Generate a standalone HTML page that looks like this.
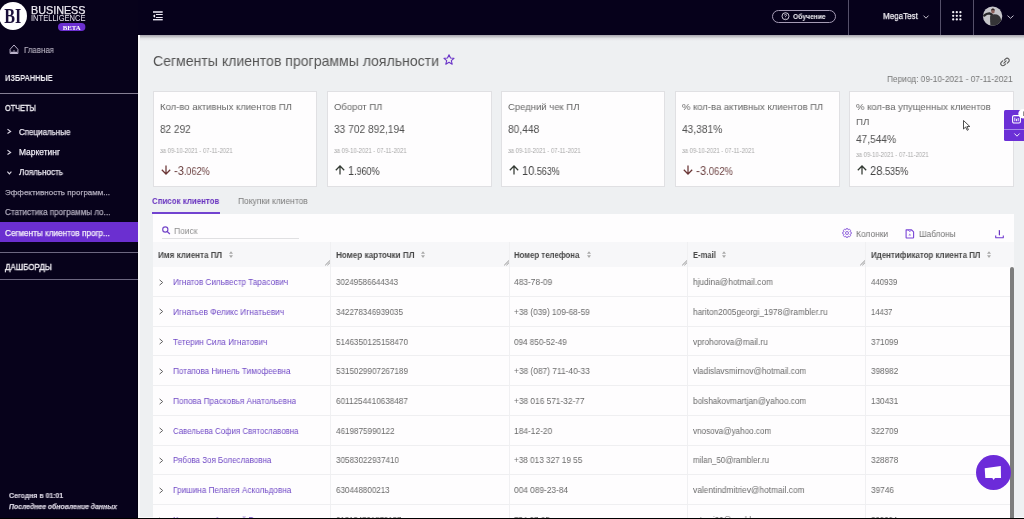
<!DOCTYPE html>
<html><head><meta charset="utf-8">
<style>
html,body{margin:0;padding:0;width:1024px;height:519px;overflow:hidden;background:#eef0f2;font-family:"Liberation Sans",sans-serif;}
.t{position:absolute;line-height:1;white-space:nowrap;transform-origin:0 0;will-change:transform;}
.r{position:absolute;}
svg{position:absolute;overflow:visible;will-change:transform;}
</style></head><body>
<div class="r" style="left:0px;top:0px;width:138px;height:519px;background:#07021b;"></div>
<div class="r" style="left:137px;top:34px;width:1px;height:485px;background:#030010;"></div>
<svg style="left:0px;top:0px" width="100" height="34" viewBox="0 0 100 34"><circle cx="13" cy="16" r="14" fill="#fff"/><text x="12.8" y="23" text-anchor="middle" font-family="Liberation Serif" font-weight="700" font-size="21" fill="#1a0f3a" textLength="17" lengthAdjust="spacingAndGlyphs">BI</text><text x="31" y="14" font-family="Liberation Sans" font-weight="400" font-size="11" fill="#ebe8f0" stroke="#ebe8f0" stroke-width="0.25" textLength="54.5" lengthAdjust="spacingAndGlyphs">BUSINESS</text><text x="31" y="21.2" font-family="Liberation Sans" font-size="8.4" fill="#e6e2ee" textLength="54.5" lengthAdjust="spacingAndGlyphs">INTELLIGENCE</text><rect x="58" y="23" width="27.4" height="8" rx="4" fill="#6b2fd0"/><text x="71.7" y="29.8" text-anchor="middle" font-family="Liberation Serif" font-weight="700" font-size="7" fill="#fff" textLength="18" lengthAdjust="spacingAndGlyphs">BETA</text></svg>
<svg style="left:9px;top:44px" width="10" height="11" viewBox="0 0 10 11"><path d="M5 1 L8.9 5.3 V9.5 H1.1 V5.3 Z" fill="none" stroke="#bcb4cc" stroke-width="1" stroke-linejoin="round"/><path d="M1.6 8.4 H8.4" stroke="#bcb4cc" stroke-width="1.3"/><path d="M4.2 7.2 Q5 5.8 5.8 7.2" fill="none" stroke="#bcb4cc" stroke-width="0.9"/></svg>
<div class="t" style="left:23.72px;top:46.00px;font-size:8.3px;color:#bcb7c6;font-weight:400;transform:scaleX(0.9496);-webkit-text-stroke:0.1px currentColor;">Главная</div>
<div class="t" style="left:5.04px;top:74.00px;font-size:9px;color:#f0eef4;font-weight:700;transform:scaleX(0.8209);">ИЗБРАННЫЕ</div>
<div class="r" style="left:0px;top:93px;width:138px;height:1px;background:#857f94;"></div>
<div class="t" style="left:5.04px;top:104.00px;font-size:8.6px;color:#f0eef4;font-weight:400;transform:scaleX(0.8493);-webkit-text-stroke:0.35px currentColor;">ОТЧЕТЫ</div>
<svg style="left:6.9px;top:129.4px" width="5" height="5" viewBox="0 0 5 5"><path d="M0.5 0.3 L3.6 2.4 L0.5 4.5" fill="none" stroke="#dcd8e4" stroke-width="1.1"/></svg>
<div class="t" style="left:19.42px;top:128.00px;font-size:8.4px;color:#ece9f2;font-weight:400;transform:scaleX(0.9530);-webkit-text-stroke:0.25px currentColor;">Специальные</div>
<svg style="left:6.9px;top:149.9px" width="5" height="5" viewBox="0 0 5 5"><path d="M0.5 0.3 L3.6 2.4 L0.5 4.5" fill="none" stroke="#dcd8e4" stroke-width="1.1"/></svg>
<div class="t" style="left:19.40px;top:148.00px;font-size:8.4px;color:#ece9f2;font-weight:400;transform:scaleX(1.0069);-webkit-text-stroke:0.25px currentColor;">Маркетинг</div>
<svg style="left:6.9px;top:170.79999999999998px" width="5" height="4" viewBox="0 0 5 4"><path d="M0.4 0.6 L2.4 2.9 L4.4 0.6" fill="none" stroke="#dcd8e4" stroke-width="1.1"/></svg>
<div class="t" style="left:19.42px;top:168.00px;font-size:8.4px;color:#ece9f2;font-weight:400;transform:scaleX(0.9625);-webkit-text-stroke:0.25px currentColor;">Лояльность</div>
<div class="t" style="left:5.02px;top:189.00px;font-size:8px;color:#aea9ba;font-weight:400;-webkit-text-stroke:0.25px currentColor;">Эффективность программ...</div>
<div class="t" style="left:5.02px;top:208.00px;font-size:8.5px;color:#aea9ba;font-weight:400;transform:scaleX(0.9525);-webkit-text-stroke:0.25px currentColor;">Статистика программы ло...</div>
<div class="r" style="left:0px;top:222px;width:138px;height:19.7px;background:#6b2fd0;"></div>
<div class="t" style="left:5.01px;top:229.00px;font-size:8.5px;color:#f4f0fa;font-weight:400;transform:scaleX(0.9631);-webkit-text-stroke:0.25px currentColor;">Сегменты клиентов прогр...</div>
<div class="r" style="left:0px;top:251.5px;width:138px;height:1px;background:#6c6780;"></div>
<div class="t" style="left:4.82px;top:263.00px;font-size:8.5px;color:#f0eef4;font-weight:400;transform:scaleX(0.9416);-webkit-text-stroke:0.35px currentColor;">ДАШБОРДЫ</div>
<div class="r" style="left:0px;top:279.3px;width:138px;height:1px;background:#6c6780;"></div>
<div class="t" style="left:8.76px;top:492.00px;font-size:7.2px;color:#d2cedb;font-weight:700;transform:scaleX(0.9630);-webkit-text-stroke:0.2px currentColor;">Сегодня в 01:01</div>
<div class="t" style="left:8.76px;top:503.00px;font-size:7.0px;color:#d2cedb;font-weight:700;font-style:italic;transform:scaleX(0.9798);-webkit-text-stroke:0.25px currentColor;">Последнее обновление данных</div>
<div class="r" style="left:138px;top:0px;width:886px;height:35px;background:#06011b;"></div>
<div class="r" style="left:138px;top:35px;width:886px;height:6px;background:linear-gradient(#a6a3ac,#c4c4c8 30%,#e4e5e8 60%,#eef0f2);"></div>
<div class="r" style="left:138px;top:35px;width:2px;height:483px;background:#f8f8fa;"></div>
<div class="r" style="left:138px;top:517px;width:886px;height:1px;background:#fafafb;"></div>
<svg style="left:150px;top:8px" width="16" height="16" viewBox="0 0 16 16"><rect x="3" y="3.2" width="9.7" height="1.6" fill="#e4e0ee"/><rect x="6" y="6" width="6.7" height="1" fill="#ece8f4"/><rect x="6" y="9" width="6.7" height="1" fill="#ece8f4"/><rect x="3" y="11" width="9.7" height="1.4" fill="#e4e0ee"/><path d="M2.9 8 L5.1 6.2 V9.8 Z" fill="#f4f2f8"/></svg>
<div class="r" style="left:772px;top:9.5px;width:62px;height:11.5px;border:1px solid #a59bb5;border-radius:7px;"></div>
<svg style="left:781px;top:12px" width="9" height="9" viewBox="0 0 9 9"><circle cx="4.5" cy="4.2" r="3.5" fill="none" stroke="#e0dce8" stroke-width="0.9"/><path d="M3.5 3.4 Q3.5 2.3 4.5 2.3 Q5.5 2.3 5.5 3.3 Q5.5 4 4.5 4.4 V5" fill="none" stroke="#e0dce8" stroke-width="0.8"/><circle cx="4.5" cy="6.1" r="0.45" fill="#e0dce8"/></svg>
<div class="t" style="left:793.46px;top:13.00px;font-size:7.6px;color:#f2f0f6;font-weight:700;transform:scaleX(0.8875);">Обучение</div>
<div class="r" style="left:848px;top:0px;width:1px;height:35px;background:#55506a;"></div>
<div class="r" style="left:939.5px;top:0px;width:1px;height:35px;background:#55506a;"></div>
<div class="r" style="left:973px;top:0px;width:1px;height:35px;background:#55506a;"></div>
<div class="t" style="left:882.92px;top:11.00px;font-size:9.5px;color:#f2f0f6;font-weight:400;transform:scaleX(0.8449);-webkit-text-stroke:0.25px currentColor;">MegaTest</div>
<svg style="left:923px;top:14.5px" width="6" height="4" viewBox="0 0 6 4"><path d="M0.5 0.6 L3 3.2 L5.5 0.6" fill="none" stroke="#d8d4e0" stroke-width="0.9"/></svg>
<svg style="left:951.6px;top:11.2px" width="10" height="10" viewBox="0 0 10 10"><circle cx="1.2" cy="1.2" r="1.15" fill="#f2f0f6"/><circle cx="1.2" cy="4.8" r="1.15" fill="#f2f0f6"/><circle cx="1.2" cy="8.4" r="1.15" fill="#f2f0f6"/><circle cx="4.8" cy="1.2" r="1.15" fill="#f2f0f6"/><circle cx="4.8" cy="4.8" r="1.15" fill="#f2f0f6"/><circle cx="4.8" cy="8.4" r="1.15" fill="#f2f0f6"/><circle cx="8.4" cy="1.2" r="1.15" fill="#f2f0f6"/><circle cx="8.4" cy="4.8" r="1.15" fill="#f2f0f6"/><circle cx="8.4" cy="8.4" r="1.15" fill="#f2f0f6"/></svg>
<svg style="left:982px;top:6px" width="21" height="21" viewBox="0 0 21 21"><defs><clipPath id="av"><circle cx="10.6" cy="10.1" r="9.7"/></clipPath></defs><g clip-path="url(#av)"><rect x="0" y="0" width="21" height="21" fill="#c6c6ca"/><path d="M2.2 9.6 Q4.5 7.2 7.5 7.4 L9.8 8.6" fill="none" stroke="#262628" stroke-width="2.3" stroke-linecap="round"/><path d="M8.2 9.4 Q11.5 7.6 15 8.6 Q18.8 10 19.3 15 L19.5 21 H8.6 Q7.8 14 8.2 9.4 Z" fill="#353537"/><ellipse cx="10.9" cy="5" rx="1.8" ry="2.5" fill="#8c625c"/><path d="M9 3.9 Q10.9 1.3 12.9 3.9 L12.6 4.6 Q10.9 3.4 9.2 4.6 Z" fill="#2a2222"/></g></svg>
<svg style="left:1007px;top:14.5px" width="7" height="4" viewBox="0 0 7 4"><path d="M0.5 0.6 L3.5 3.3 L6.5 0.6" fill="none" stroke="#d8d4e0" stroke-width="0.9"/></svg>
<div class="t" style="left:152.51px;top:54.00px;font-size:14.5px;color:#545454;font-weight:400;transform:scaleX(0.9702);">Сегменты клиентов программы лояльности</div>
<svg style="left:443px;top:54.2px" width="12" height="11" viewBox="0 0 12 11"><path d="M6 0.7 L7.5 4 L11 4.3 L8.3 6.6 L9.2 10.2 L6 8.3 L2.8 10.2 L3.7 6.6 L1 4.3 L4.5 4 Z" fill="none" stroke="#6b35c8" stroke-width="1.1" stroke-linejoin="round"/></svg>
<svg style="left:999.9px;top:56.8px" width="10" height="10" viewBox="0 0 10 10"><g fill="none" stroke="#5e5e5e" stroke-width="1.15" stroke-linecap="round"><path d="M3.9 6.1 L6.1 3.9"/><path d="M4.3 3.2 L5.6 1.9 A2.1 2.1 0 0 1 8.6 4.9 L7.3 6.2"/><path d="M5.7 6.8 L4.4 8.1 A2.1 2.1 0 0 1 1.4 5.1 L2.7 3.8"/></g></svg>
<div class="t" style="left:887.41px;top:75.00px;font-size:9.2px;color:#777777;font-weight:400;transform:scaleX(0.9048);">Период: 09-10-2021 - 07-11-2021</div>
<div class="r" style="left:153px;top:91px;width:162px;height:94px;background:#fefdfe;border:1px solid #e0e0e3;"></div>
<div class="t" style="left:160.47px;top:102.00px;font-size:9.8px;color:#656565;font-weight:400;transform:scaleX(0.9703);">Кол-во активных клиентов ПЛ</div>
<div class="t" style="left:160.45px;top:124.00px;font-size:11px;color:#525252;font-weight:400;transform:scaleX(0.9122);">82 292</div>
<div class="t" style="left:160.29px;top:148.00px;font-size:6.6px;color:#a8a8a8;font-weight:400;transform:scaleX(0.8936);">за 09-10-2021 - 07-11-2021</div>
<svg style="left:161.2px;top:165px" width="10" height="10" viewBox="0 0 10 10"><path d="M5 0.4 V8.8 M0.8 4.8 L5 9 L9.2 4.8" fill="none" stroke="#6a3535" stroke-width="1.25"/></svg>
<div class="t" style="left:173.61px;top:165.00px;font-size:12.4px;color:#6e4444;font-weight:400;transform:scaleX(0.8942);">-3<span style="font-size:10.2px">.062%</span></div>
<div class="r" style="left:327px;top:91px;width:163px;height:94px;background:#fefdfe;border:1px solid #e0e0e3;"></div>
<div class="t" style="left:334.47px;top:102.00px;font-size:9.8px;color:#656565;font-weight:400;transform:scaleX(0.9671);">Оборот ПЛ</div>
<div class="t" style="left:334.44px;top:124.00px;font-size:11px;color:#525252;font-weight:400;transform:scaleX(0.9259);">33 702 892,194</div>
<div class="t" style="left:334.29px;top:148.00px;font-size:6.6px;color:#a8a8a8;font-weight:400;transform:scaleX(0.8936);">за 09-10-2021 - 07-11-2021</div>
<svg style="left:335px;top:165px" width="10" height="10" viewBox="0 0 10 10"><path d="M5 9.6 V1.2 M0.8 5.2 L5 1 L9.2 5.2" fill="none" stroke="#333a33" stroke-width="1.25"/></svg>
<div class="t" style="left:347.62px;top:165.00px;font-size:12.4px;color:#444444;font-weight:400;transform:scaleX(0.8772);">1<span style="font-size:10.2px">.960%</span></div>
<div class="r" style="left:501px;top:91px;width:162px;height:94px;background:#fefdfe;border:1px solid #e0e0e3;"></div>
<div class="t" style="left:508.47px;top:102.00px;font-size:9.8px;color:#656565;font-weight:400;transform:scaleX(0.9702);">Средний чек ПЛ</div>
<div class="t" style="left:508.44px;top:124.00px;font-size:11px;color:#525252;font-weight:400;transform:scaleX(0.9300);">80,448</div>
<div class="t" style="left:508.29px;top:148.00px;font-size:6.6px;color:#a8a8a8;font-weight:400;transform:scaleX(0.8936);">за 09-10-2021 - 07-11-2021</div>
<svg style="left:509px;top:165px" width="10" height="10" viewBox="0 0 10 10"><path d="M5 9.6 V1.2 M0.8 5.2 L5 1 L9.2 5.2" fill="none" stroke="#333a33" stroke-width="1.25"/></svg>
<div class="t" style="left:521.62px;top:165.00px;font-size:12.4px;color:#444444;font-weight:400;transform:scaleX(0.8855);">10<span style="font-size:10.2px">.563%</span></div>
<div class="r" style="left:675px;top:91px;width:163px;height:94px;background:#fefdfe;border:1px solid #e0e0e3;"></div>
<div class="t" style="left:682.47px;top:102.00px;font-size:9.8px;color:#656565;font-weight:400;transform:scaleX(0.9667);">% кол-ва активных клиентов ПЛ</div>
<div class="t" style="left:682.44px;top:124.00px;font-size:11px;color:#525252;font-weight:400;transform:scaleX(0.9255);">43,381%</div>
<div class="t" style="left:682.29px;top:148.00px;font-size:6.6px;color:#a8a8a8;font-weight:400;transform:scaleX(0.8936);">за 09-10-2021 - 07-11-2021</div>
<svg style="left:683.2px;top:165px" width="10" height="10" viewBox="0 0 10 10"><path d="M5 0.4 V8.8 M0.8 4.8 L5 9 L9.2 4.8" fill="none" stroke="#6a3535" stroke-width="1.25"/></svg>
<div class="t" style="left:695.60px;top:165.00px;font-size:12.4px;color:#6e4444;font-weight:400;transform:scaleX(0.9268);">-3<span style="font-size:10.2px">.062%</span></div>
<div class="r" style="left:849px;top:91px;width:163px;height:94px;background:#fefdfe;border:1px solid #e0e0e3;"></div>
<div class="t" style="left:856.47px;top:102.00px;font-size:9.8px;color:#656565;font-weight:400;transform:scaleX(0.9714);">% кол-ва упущенных клиентов</div>
<div class="t" style="left:856.46px;top:117.00px;font-size:9.8px;color:#656565;font-weight:400;transform:scaleX(0.9789);">ПЛ</div>
<div class="t" style="left:856.45px;top:134.00px;font-size:11px;color:#525252;font-weight:400;transform:scaleX(0.9209);">47,544%</div>
<div class="t" style="left:856.29px;top:152.00px;font-size:6.6px;color:#a8a8a8;font-weight:400;transform:scaleX(0.8936);">за 09-10-2021 - 07-11-2021</div>
<svg style="left:857px;top:165px" width="10" height="10" viewBox="0 0 10 10"><path d="M5 9.6 V1.2 M0.8 5.2 L5 1 L9.2 5.2" fill="none" stroke="#333a33" stroke-width="1.25"/></svg>
<div class="t" style="left:869.61px;top:165.00px;font-size:12.4px;color:#444444;font-weight:400;transform:scaleX(0.8972);">28<span style="font-size:10.2px">.535%</span></div>
<div class="r" style="left:1004px;top:109.8px;width:20px;height:31px;background:#6b2fd6;border-radius:1.5px 0 0 1.5px;"></div>
<div class="r" style="left:1004px;top:128.5px;width:20px;height:1px;background:#a58ae8;"></div>
<svg style="left:1012px;top:115.3px" width="9" height="8.5" viewBox="0 0 9 8.5"><rect x="0.6" y="0.6" width="7.8" height="7.4" rx="1.4" fill="none" stroke="#fff" stroke-width="1.1"/><path d="M2.8 2.6 V6.2 M4.5 3.8 V6.2 M6.2 3 V6.2" stroke="#fff" stroke-width="0.9"/></svg>
<svg style="left:1014.3px;top:133px" width="6" height="4" viewBox="0 0 6 4"><path d="M0.4 0.5 L3 3.2 L5.6 0.5" fill="none" stroke="#fff" stroke-width="0.9"/></svg>
<svg style="left:1017.5px;top:109.3px" width="10" height="10" viewBox="0 0 10 10"><circle cx="5" cy="4.7" r="4.7" fill="#fff"/><path d="M5.6 2.4 V7" stroke="#777" stroke-width="0.9"/></svg>
<svg style="left:963px;top:120px" width="8" height="11" viewBox="0 0 8 11"><path d="M0.5 0.5 V9 L2.6 7 L4.2 10.3 L5.4 9.7 L3.9 6.6 L6.8 6.5 Z" fill="#fff" stroke="#222" stroke-width="0.8"/></svg>
<div class="t" style="left:152.12px;top:197.00px;font-size:9.2px;color:#6a35c0;font-weight:700;transform:scaleX(0.8606);">Список клиентов</div>
<div class="r" style="left:152px;top:212px;width:68px;height:2px;background:#7243d0;"></div>
<div class="t" style="left:238.40px;top:197.00px;font-size:9.2px;color:#7c7c7c;font-weight:400;transform:scaleX(0.9182);">Покупки клиентов</div>
<div class="r" style="left:153px;top:214px;width:861px;height:305px;background:#fefdfe;"></div>
<svg style="left:161px;top:225px" width="10" height="10" viewBox="0 0 10 10"><circle cx="4.3" cy="4.5" r="2.6" fill="none" stroke="#7446c8" stroke-width="1.15"/><path d="M6.2 6.5 L8.6 8.7" stroke="#7446c8" stroke-width="1.2" stroke-linecap="round"/></svg>
<div class="t" style="left:173.70px;top:227.00px;font-size:9px;color:#8e8e8e;font-weight:400;transform:scaleX(0.9378);">Поиск</div>
<div class="r" style="left:162px;top:237.5px;width:137px;height:1.5px;background:#e0e0e2;"></div>
<svg style="left:842.1px;top:228.2px" width="10" height="10" viewBox="0 0 10 10"><path d="M4.2 0.6 H5.8 L6.2 1.9 L7.5 1.2 L8.6 2.3 L7.9 3.6 L9.3 4.2 V5.8 L7.9 6.4 L8.6 7.7 L7.5 8.8 L6.2 8.1 L5.8 9.4 H4.2 L3.8 8.1 L2.5 8.8 L1.4 7.7 L2.1 6.4 L0.7 5.8 V4.2 L2.1 3.6 L1.4 2.3 L2.5 1.2 L3.8 1.9 Z" fill="none" stroke="#8554d8" stroke-width="0.9" stroke-linejoin="round"/><circle cx="5" cy="5" r="1.5" fill="none" stroke="#8554d8" stroke-width="0.9"/></svg>
<div class="t" style="left:855.71px;top:230.00px;font-size:9px;color:#727272;font-weight:400;transform:scaleX(0.9347);">Колонки</div>
<svg style="left:905.4px;top:228.5px" width="10" height="10" viewBox="0 0 10 10"><path d="M1.1 0.9 H6.6 L8.6 2.9 V8.4 Q8.6 9 8 9 H1.7 Q1.1 9 1.1 8.4 Z" fill="none" stroke="#7a45d6" stroke-width="1.1" stroke-linejoin="round"/><path d="M3 1 L4.8 2.8 L6.6 1" fill="none" stroke="#8a5ce0" stroke-width="0.8"/><path d="M3.4 6.6 L4.8 4.6 L6.2 6.6 Z" fill="#9d7ae6"/></svg>
<div class="t" style="left:918.61px;top:230.00px;font-size:9px;color:#727272;font-weight:400;transform:scaleX(0.9193);">Шаблоны</div>
<svg style="left:995px;top:229.5px" width="10" height="9" viewBox="0 0 10 9"><path d="M4.4 0.6 V4.8" fill="none" stroke="#6a35c0" stroke-width="1.2" stroke-linecap="round"/><path d="M0.7 5.6 V7.4 Q0.7 7.8 1.1 7.8 H7.9 Q8.3 7.8 8.3 7.4 V5.6" fill="none" stroke="#7038d0" stroke-width="1.1"/></svg>
<div class="r" style="left:153px;top:242px;width:861px;height:24.5px;background:#f7f7f9;"></div>
<div class="t" style="left:157.92px;top:251.00px;font-size:8.8px;color:#484848;font-weight:700;transform:scaleX(0.9123);">Имя клиента ПЛ</div>
<svg style="left:228.8px;top:251.4px" width="4" height="7" viewBox="0 0 4 7"><path d="M0 2.7 L2 0.2 L4 2.7 Z M0 4.3 L2 6.9 L4 4.3 Z" fill="#a9a9a9"/></svg>
<svg style="left:324.5px;top:259.5px" width="6" height="6" viewBox="0 0 6 6"><path d="M0.2 5.3 L5 0.5 M2.4 5.2 L5 2.6" stroke="#7a7a7a" stroke-width="0.8"/></svg>
<div class="t" style="left:336.01px;top:251.00px;font-size:8.8px;color:#484848;font-weight:700;transform:scaleX(0.9280);">Номер карточки ПЛ</div>
<svg style="left:421.2px;top:251.4px" width="4" height="7" viewBox="0 0 4 7"><path d="M0 2.7 L2 0.2 L4 2.7 Z M0 4.3 L2 6.9 L4 4.3 Z" fill="#a9a9a9"/></svg>
<svg style="left:503.5px;top:259.5px" width="6" height="6" viewBox="0 0 6 6"><path d="M0.2 5.3 L5 0.5 M2.4 5.2 L5 2.6" stroke="#7a7a7a" stroke-width="0.8"/></svg>
<div class="t" style="left:514.43px;top:251.00px;font-size:8.8px;color:#484848;font-weight:700;transform:scaleX(0.8877);">Номер телефона</div>
<svg style="left:586.5999999999999px;top:251.4px" width="4" height="7" viewBox="0 0 4 7"><path d="M0 2.7 L2 0.2 L4 2.7 Z M0 4.3 L2 6.9 L4 4.3 Z" fill="#a9a9a9"/></svg>
<svg style="left:681.5px;top:259.5px" width="6" height="6" viewBox="0 0 6 6"><path d="M0.2 5.3 L5 0.5 M2.4 5.2 L5 2.6" stroke="#7a7a7a" stroke-width="0.8"/></svg>
<div class="t" style="left:692.73px;top:251.00px;font-size:8.8px;color:#484848;font-weight:700;transform:scaleX(0.8634);">E-mail</div>
<svg style="left:722.0px;top:251.4px" width="4" height="7" viewBox="0 0 4 7"><path d="M0 2.7 L2 0.2 L4 2.7 Z M0 4.3 L2 6.9 L4 4.3 Z" fill="#a9a9a9"/></svg>
<svg style="left:859.5px;top:259.5px" width="6" height="6" viewBox="0 0 6 6"><path d="M0.2 5.3 L5 0.5 M2.4 5.2 L5 2.6" stroke="#7a7a7a" stroke-width="0.8"/></svg>
<div class="t" style="left:870.72px;top:251.00px;font-size:8.8px;color:#484848;font-weight:700;transform:scaleX(0.9006);">Идентификатор клиента ПЛ</div>
<svg style="left:986.5999999999999px;top:251.4px" width="4" height="7" viewBox="0 0 4 7"><path d="M0 2.7 L2 0.2 L4 2.7 Z M0 4.3 L2 6.9 L4 4.3 Z" fill="#a9a9a9"/></svg>
<div class="r" style="left:330px;top:242px;width:1px;height:277px;background:#f0f0f2;"></div>
<div class="r" style="left:509px;top:242px;width:1px;height:277px;background:#f0f0f2;"></div>
<div class="r" style="left:687px;top:242px;width:1px;height:277px;background:#f0f0f2;"></div>
<div class="r" style="left:865px;top:242px;width:1px;height:277px;background:#f0f0f2;"></div>
<div class="r" style="left:153px;top:295.8px;width:857px;height:1px;background:#efeff1;"></div>
<svg style="left:159px;top:279px" width="5" height="7" viewBox="0 0 5 7"><path d="M0.6 0.9 L3.7 3.5 L0.6 6.1" fill="none" stroke="#5c5c5c" stroke-width="0.95"/></svg>
<div class="t" style="left:172.81px;top:278.00px;font-size:8.8px;color:#7049c6;font-weight:400;transform:scaleX(0.9255);">Игнатов Сильвестр Тарасович</div>
<div class="t" style="left:336.02px;top:278.00px;font-size:8.8px;color:#6a6a6a;font-weight:400;transform:scaleX(0.9066);">30249586644343</div>
<div class="t" style="left:514.41px;top:278.00px;font-size:8.8px;color:#6a6a6a;font-weight:400;transform:scaleX(0.9524);">483-78-09</div>
<div class="t" style="left:692.71px;top:278.00px;font-size:8.8px;color:#6a6a6a;font-weight:400;transform:scaleX(0.9441);">hjudina@hotmail.com</div>
<div class="t" style="left:870.72px;top:278.00px;font-size:8.8px;color:#6a6a6a;font-weight:400;transform:scaleX(0.8958);">440939</div>
<div class="r" style="left:153px;top:325.54px;width:857px;height:1px;background:#efeff1;"></div>
<svg style="left:159px;top:308px" width="5" height="7" viewBox="0 0 5 7"><path d="M0.6 0.9 L3.7 3.5 L0.6 6.1" fill="none" stroke="#5c5c5c" stroke-width="0.95"/></svg>
<div class="t" style="left:172.81px;top:308.00px;font-size:8.8px;color:#7049c6;font-weight:400;transform:scaleX(0.9375);">Игнатьев Феликс Игнатьевич</div>
<div class="t" style="left:336.02px;top:308.00px;font-size:8.8px;color:#6a6a6a;font-weight:400;transform:scaleX(0.9129);">342278346939035</div>
<div class="t" style="left:514.41px;top:308.00px;font-size:8.8px;color:#6a6a6a;font-weight:400;transform:scaleX(0.9422);">+38 (039) 109-68-59</div>
<div class="t" style="left:692.71px;top:308.00px;font-size:8.8px;color:#6a6a6a;font-weight:400;transform:scaleX(0.9352);">hariton2005georgi_1978@rambler.ru</div>
<div class="t" style="left:870.73px;top:308.00px;font-size:8.8px;color:#6a6a6a;font-weight:400;transform:scaleX(0.8746);">14437</div>
<div class="r" style="left:153px;top:355.28px;width:857px;height:1px;background:#efeff1;"></div>
<svg style="left:159px;top:338px" width="5" height="7" viewBox="0 0 5 7"><path d="M0.6 0.9 L3.7 3.5 L0.6 6.1" fill="none" stroke="#5c5c5c" stroke-width="0.95"/></svg>
<div class="t" style="left:172.81px;top:338.00px;font-size:8.8px;color:#7049c6;font-weight:400;transform:scaleX(0.9315);">Тетерин Сила Игнатович</div>
<div class="t" style="left:336.02px;top:338.00px;font-size:8.8px;color:#6a6a6a;font-weight:400;transform:scaleX(0.9185);">5146350125158470</div>
<div class="t" style="left:514.42px;top:338.00px;font-size:8.8px;color:#6a6a6a;font-weight:400;transform:scaleX(0.9225);">094 850-52-49</div>
<div class="t" style="left:692.71px;top:338.00px;font-size:8.8px;color:#6a6a6a;font-weight:400;transform:scaleX(0.9415);">vprohorova@mail.ru</div>
<div class="t" style="left:870.71px;top:338.00px;font-size:8.8px;color:#6a6a6a;font-weight:400;transform:scaleX(0.9265);">371099</div>
<div class="r" style="left:153px;top:385.02px;width:857px;height:1px;background:#efeff1;"></div>
<svg style="left:159px;top:368px" width="5" height="7" viewBox="0 0 5 7"><path d="M0.6 0.9 L3.7 3.5 L0.6 6.1" fill="none" stroke="#5c5c5c" stroke-width="0.95"/></svg>
<div class="t" style="left:172.81px;top:367.00px;font-size:8.8px;color:#7049c6;font-weight:400;transform:scaleX(0.9282);">Потапова Нинель Тимофеевна</div>
<div class="t" style="left:336.02px;top:367.00px;font-size:8.8px;color:#6a6a6a;font-weight:400;transform:scaleX(0.9185);">5315029907267189</div>
<div class="t" style="left:514.41px;top:367.00px;font-size:8.8px;color:#6a6a6a;font-weight:400;transform:scaleX(0.9497);">+38 (087) 711-40-33</div>
<div class="t" style="left:692.71px;top:367.00px;font-size:8.8px;color:#6a6a6a;font-weight:400;transform:scaleX(0.9372);">vladislavsmirnov@hotmail.com</div>
<div class="t" style="left:870.71px;top:367.00px;font-size:8.8px;color:#6a6a6a;font-weight:400;transform:scaleX(0.9265);">398982</div>
<div class="r" style="left:153px;top:414.76px;width:857px;height:1px;background:#efeff1;"></div>
<svg style="left:159px;top:398px" width="5" height="7" viewBox="0 0 5 7"><path d="M0.6 0.9 L3.7 3.5 L0.6 6.1" fill="none" stroke="#5c5c5c" stroke-width="0.95"/></svg>
<div class="t" style="left:172.81px;top:397.00px;font-size:8.8px;color:#7049c6;font-weight:400;transform:scaleX(0.9355);">Попова Прасковья Анатольевна</div>
<div class="t" style="left:336.01px;top:397.00px;font-size:8.8px;color:#6a6a6a;font-weight:400;transform:scaleX(0.9261);">6011254410638487</div>
<div class="t" style="left:514.41px;top:397.00px;font-size:8.8px;color:#6a6a6a;font-weight:400;transform:scaleX(0.9451);">+38 016 571-32-77</div>
<div class="t" style="left:692.71px;top:397.00px;font-size:8.8px;color:#6a6a6a;font-weight:400;transform:scaleX(0.9371);">bolshakovmartjan@yahoo.com</div>
<div class="t" style="left:870.71px;top:397.00px;font-size:8.8px;color:#6a6a6a;font-weight:400;transform:scaleX(0.9265);">130431</div>
<div class="r" style="left:153px;top:444.5px;width:857px;height:1px;background:#efeff1;"></div>
<svg style="left:159px;top:427px" width="5" height="7" viewBox="0 0 5 7"><path d="M0.6 0.9 L3.7 3.5 L0.6 6.1" fill="none" stroke="#5c5c5c" stroke-width="0.95"/></svg>
<div class="t" style="left:172.82px;top:427.00px;font-size:8.8px;color:#7049c6;font-weight:400;transform:scaleX(0.8933);">Савельева София Святославовна</div>
<div class="t" style="left:336.02px;top:427.00px;font-size:8.8px;color:#6a6a6a;font-weight:400;transform:scaleX(0.9212);">4619875990122</div>
<div class="t" style="left:514.41px;top:427.00px;font-size:8.8px;color:#6a6a6a;font-weight:400;transform:scaleX(0.9524);">184-12-20</div>
<div class="t" style="left:692.72px;top:427.00px;font-size:8.8px;color:#6a6a6a;font-weight:400;transform:scaleX(0.9229);">vnosova@yahoo.com</div>
<div class="t" style="left:870.71px;top:427.00px;font-size:8.8px;color:#6a6a6a;font-weight:400;transform:scaleX(0.9265);">322709</div>
<div class="r" style="left:153px;top:474.24px;width:857px;height:1px;background:#efeff1;"></div>
<svg style="left:159px;top:457px" width="5" height="7" viewBox="0 0 5 7"><path d="M0.6 0.9 L3.7 3.5 L0.6 6.1" fill="none" stroke="#5c5c5c" stroke-width="0.95"/></svg>
<div class="t" style="left:172.82px;top:456.00px;font-size:8.8px;color:#7049c6;font-weight:400;transform:scaleX(0.9068);">Рябова Зоя Болеславовна</div>
<div class="t" style="left:336.02px;top:456.00px;font-size:8.8px;color:#6a6a6a;font-weight:400;transform:scaleX(0.9197);">30583022937410</div>
<div class="t" style="left:514.41px;top:456.00px;font-size:8.8px;color:#6a6a6a;font-weight:400;transform:scaleX(0.9277);">+38 013 327 19 55</div>
<div class="t" style="left:692.72px;top:456.00px;font-size:8.8px;color:#6a6a6a;font-weight:400;transform:scaleX(0.9022);">milan_50@rambler.ru</div>
<div class="t" style="left:870.71px;top:456.00px;font-size:8.8px;color:#6a6a6a;font-weight:400;transform:scaleX(0.9265);">328878</div>
<div class="r" style="left:153px;top:503.98px;width:857px;height:1px;background:#efeff1;"></div>
<svg style="left:159px;top:487px" width="5" height="7" viewBox="0 0 5 7"><path d="M0.6 0.9 L3.7 3.5 L0.6 6.1" fill="none" stroke="#5c5c5c" stroke-width="0.95"/></svg>
<div class="t" style="left:172.81px;top:486.00px;font-size:8.8px;color:#7049c6;font-weight:400;transform:scaleX(0.9286);">Гришина Пелагея Аскольдовна</div>
<div class="t" style="left:336.02px;top:486.00px;font-size:8.8px;color:#6a6a6a;font-weight:400;transform:scaleX(0.9145);">630448800213</div>
<div class="t" style="left:514.41px;top:486.00px;font-size:8.8px;color:#6a6a6a;font-weight:400;transform:scaleX(0.9452);">004 089-23-84</div>
<div class="t" style="left:692.71px;top:486.00px;font-size:8.8px;color:#6a6a6a;font-weight:400;transform:scaleX(0.9492);">valentindmitriev@hotmail.com</div>
<div class="t" style="left:870.71px;top:486.00px;font-size:8.8px;color:#6a6a6a;font-weight:400;transform:scaleX(0.9359);">39746</div>
<div class="r" style="left:153px;top:533.72px;width:857px;height:1px;background:#efeff1;"></div>
<svg style="left:159px;top:517px" width="5" height="7" viewBox="0 0 5 7"><path d="M0.6 0.9 L3.7 3.5 L0.6 6.1" fill="none" stroke="#5c5c5c" stroke-width="0.95"/></svg>
<div class="t" style="left:172.82px;top:516.00px;font-size:8.8px;color:#7049c6;font-weight:400;transform:scaleX(0.9050);">Харитонов Арсений Богданович</div>
<div class="t" style="left:336.03px;top:516.00px;font-size:8.8px;color:#6a6a6a;font-weight:400;transform:scaleX(0.8900);">213134701879137</div>
<div class="t" style="left:514.43px;top:516.00px;font-size:8.8px;color:#6a6a6a;font-weight:400;transform:scaleX(0.8900);">754-07-25</div>
<div class="t" style="left:692.73px;top:516.00px;font-size:8.8px;color:#6a6a6a;font-weight:400;transform:scaleX(0.8900);">artemi96@rambler.ru</div>
<div class="t" style="left:870.73px;top:516.00px;font-size:8.8px;color:#6a6a6a;font-weight:400;transform:scaleX(0.8900);">300664</div>
<div class="r" style="left:1010px;top:266.5px;width:4px;height:260px;background:#7d7d7d;border-radius:2px 2px 0 0;"></div>
<div class="r" style="left:975.6px;top:454.7px;width:35px;height:35px;border-radius:50%;background:#6c2bd9;"></div>
<svg style="left:984px;top:465px" width="18" height="16" viewBox="0 0 18 16"><path d="M0.7 3.2 L16.8 1.1 L17 13 L11 13 L9.6 15.1 L8.3 13 L1.3 13 Z" fill="#fff"/></svg>
<div class="r" style="left:0px;top:518px;width:1024px;height:1px;background:#000000;"></div>
</body></html>
